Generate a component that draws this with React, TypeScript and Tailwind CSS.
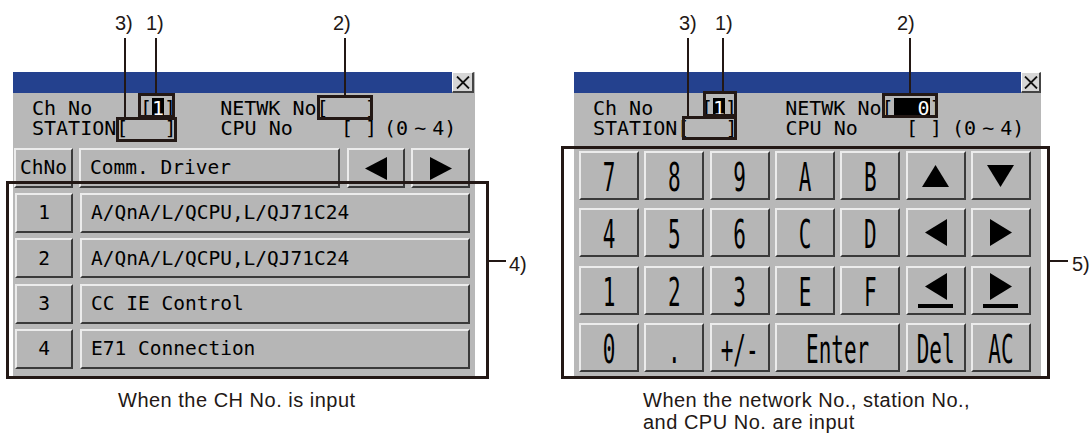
import type { ReactNode } from "react";

const mono = "font-['DejaVu_Sans_Mono','Liberation_Mono',monospace]";
const sans = "font-['Liberation_Sans',Arial,sans-serif]";
const btn =
  "flex items-center border-2 border-t-[#ececec] border-l-[#ececec] border-r-[#3a3a3a] border-b-[#3a3a3a] bg-[#b6b6b6]";

function CloseBox({ w }: { w: string }) {
  return (
    <div className={`${w} flex h-full items-center justify-center border-l border-t border-l-white border-t-white border-b-2 border-r-2 border-b-[#444] border-r-[#444] bg-[#d6d6d6]`}>
      <svg width="14" height="13" viewBox="0 0 14 13">
        <path d="M1 0.5 L13 12.5 M13 0.5 L1 12.5" stroke="#111" strokeWidth="1.8" />
      </svg>
    </div>
  );
}

function Header({ right }: { right?: boolean }) {
  const gap = right ? "w-[48px]" : "w-[44px]";
  return (
    <div className={`${mono} whitespace-pre pl-[19px] pt-[5px] text-[20px] leading-[20px] text-black`}>
      <div className="flex h-[20px]">
        <span className="w-[108px]">Ch No</span>
        <span>[</span>
        <span className="bg-black text-white">1</span>
        <span>]</span>
        <span className={gap} />
        <span>NETWK No</span>
        {right ? (
          <>
            <span>[</span>
            <span className="w-[36px] bg-black text-right text-white">0</span>
            <span>]</span>
          </>
        ) : (
          <span>[   ]</span>
        )}
      </div>
      <div className="flex h-[20px]">
        <span>STATION</span>
        <span>[   ]</span>
        <span className={gap} />
        <span>CPU No    [ ]</span>
        <span className={right ? "w-[10px]" : "w-[7px]"} />
        <span>(0</span>
        <span className="w-[24px] text-center">~</span>
        <span>4)</span>
      </div>
    </div>
  );
}

function Panel({ right, close, children }: { right?: boolean; close: string; children: ReactNode }) {
  return (
    <div className="bg-[#b8b8b8]">
      <div className="flex h-[21px]">
        <div className="flex-1 bg-[#24418e]" />
        <CloseBox w={close} />
        {!right && <div className="w-[1px]" />}
      </div>
      <Header right={right} />
      {children}
    </div>
  );
}

function Tri({ dir, w, h }: { dir: "l" | "r" | "u" | "d"; w: number; h: number }) {
  const pts = {
    l: `${w},0 0,${h / 2} ${w},${h}`,
    r: `0,0 ${w},${h / 2} 0,${h}`,
    u: `${w / 2},0 ${w},${h} 0,${h}`,
    d: `0,0 ${w},0 ${w / 2},${h}`,
  }[dir];
  return (
    <svg width={w} height={h} viewBox={`0 0 ${w} ${h}`}>
      <polygon points={pts} fill="#000" />
    </svg>
  );
}

const drivers = ["A/QnA/L/QCPU,L/QJ71C24", "A/QnA/L/QCPU,L/QJ71C24", "CC IE Control", "E71 Connection"];

function ChannelList() {
  return (
    <div className={`${mono} text-[19.5px] text-black`}>
      <div className="ml-[1px] mt-[10px] flex h-[40px]">
        <div className={`${btn} w-[59px] justify-center`}>ChNo</div>
        <div className={`${btn} ml-[6px] w-[261px] whitespace-pre pl-[9px]`}>Comm. Driver</div>
        <div className={`${btn} ml-[7px] w-[58px] justify-center`}>
          <Tri dir="l" w={22} h={23} />
        </div>
        <div className={`${btn} ml-[6px] w-[59px] justify-center`}>
          <Tri dir="r" w={22} h={23} />
        </div>
      </div>
      <div className="ml-[2px] mt-[5px] flex flex-col gap-y-[5.33px] pb-[7px]">
        {drivers.map((d, i) => (
          <div key={i} className="flex h-[40px]">
            <div className={`${btn} w-[58px] justify-center`}>{i + 1}</div>
            <div className={`${btn} ml-[7px] w-[390px] whitespace-pre pl-[9px]`}>{d}</div>
          </div>
        ))}
      </div>
    </div>
  );
}

function Underlined({ dir }: { dir: "l" | "r" }) {
  return (
    <div className="flex flex-col items-center">
      <Tri dir={dir} w={22} h={27} />
      <div className="mt-[4px] h-[4px] w-[35px] bg-black" />
    </div>
  );
}

type Key = { label?: string; icon?: ReactNode; span?: boolean };

const keys: Key[] = [
  { label: "7" }, { label: "8" }, { label: "9" }, { label: "A" }, { label: "B" },
  { icon: <Tri dir="u" w={27} h={22} /> }, { icon: <Tri dir="d" w={27} h={22} /> },
  { label: "4" }, { label: "5" }, { label: "6" }, { label: "C" }, { label: "D" },
  { icon: <Tri dir="l" w={22} h={27} /> }, { icon: <Tri dir="r" w={22} h={27} /> },
  { label: "1" }, { label: "2" }, { label: "3" }, { label: "E" }, { label: "F" },
  { icon: <Underlined dir="l" /> }, { icon: <Underlined dir="r" /> },
  { label: "0" }, { label: "." }, { label: "+/-" }, { label: "Enter", span: true }, { label: "Del" }, { label: "AC" },
];

function Keypad() {
  return (
    <div className="mt-[13px] grid grid-cols-[repeat(7,60px)] gap-x-[5.33px] gap-y-[8.33px] pb-[4px] pl-[5px]">
      {keys.map((k, i) => (
        <div key={i} className={`${btn} h-[49px] justify-center ${k.span ? "col-span-2" : ""}`}>
          {k.icon ?? (
            <span className={`${mono} inline-block whitespace-pre pt-[4px] text-[21px] leading-[21px] text-black scale-y-[1.85]`}>
              {k.label}
            </span>
          )}
        </div>
      ))}
    </div>
  );
}

const ink = "absolute bg-[#231815]";
const frame = "absolute border-[3px] border-[#231815]";
const label = `absolute ${sans} text-[20px] leading-[20px] text-[#231815]`;

export default function App() {
  return (
    <div className="relative h-[436px] w-[1091px] overflow-hidden bg-white">
      <div className="flex pt-[72px]">
        <div className="ml-[13px] flex w-[462px] flex-col">
          <Panel close="w-[22px]">
            <ChannelList />
          </Panel>
          <p className={`${sans} mt-[13px] pl-[105px] text-[20px] leading-[22px] tracking-[0.5px] text-[#231815]`}>
            When the CH No. is input
          </p>
        </div>
        <div className="ml-[99px] flex w-[467px] flex-col">
          <Panel right close="w-[20px]">
            <Keypad />
          </Panel>
          <p className={`${sans} mt-[13px] pl-[69px] text-[20px] leading-[22px] tracking-[0.5px] text-[#231815]`}>
            <span className="block">When the network No., station No.,</span>
            <span className="block">and CPU No. are input</span>
          </p>
        </div>
      </div>

      {/* callouts, left figure */}
      <span className={`${label} left-[115px] top-[13px]`}>3)</span>
      <span className={`${label} left-[146px] top-[13px]`}>1)</span>
      <span className={`${label} left-[333px] top-[13px]`}>2)</span>
      <div className={`${ink} left-[124px] top-[38px] h-[79px] w-[2px]`} />
      <div className={`${ink} left-[155px] top-[38px] h-[55px] w-[2px]`} />
      <div className={`${ink} left-[344px] top-[38px] h-[57px] w-[2px]`} />
      <div className={`${frame} left-[138px] top-[93px] h-[25px] w-[37px]`} />
      <div className={`${frame} left-[116px] top-[117px] h-[25px] w-[61px]`} />
      <div className={`${frame} left-[317px] top-[95px] h-[25px] w-[56px]`} />
      <div className={`${frame} left-[6px] top-[181px] h-[198px] w-[483px]`} />
      <div className={`${ink} left-[489px] top-[260px] h-[2px] w-[17px]`} />
      <span className={`${label} left-[509px] top-[254px]`}>4)</span>

      {/* callouts, right figure */}
      <span className={`${label} left-[679px] top-[13px]`}>3)</span>
      <span className={`${label} left-[715px] top-[13px]`}>1)</span>
      <span className={`${label} left-[897px] top-[13px]`}>2)</span>
      <div className={`${ink} left-[687px] top-[38px] h-[79px] w-[2px]`} />
      <div className={`${ink} left-[722px] top-[38px] h-[53px] w-[2px]`} />
      <div className={`${ink} left-[909px] top-[38px] h-[55px] w-[2px]`} />
      <div className={`${frame} left-[703px] top-[91px] h-[26px] w-[34px]`} />
      <div className={`${frame} left-[682px] top-[116px] h-[24px] w-[55px]`} />
      <div className={`${frame} left-[882px] top-[93px] h-[25px] w-[56px]`} />
      <div className={`${frame} left-[561px] top-[146px] h-[233px] w-[489px]`} />
      <div className={`${ink} left-[1050px] top-[260px] h-[2px] w-[18px]`} />
      <span className={`${label} left-[1072px] top-[254px]`}>5)</span>
    </div>
  );
}
